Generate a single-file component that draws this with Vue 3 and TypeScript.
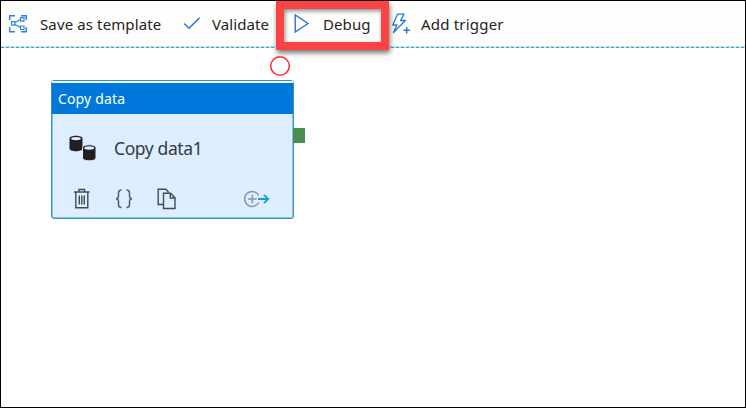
<script setup lang="ts">
import { ref } from 'vue'

const activityType = ref<string>('Copy data')
const activityName = ref<string>('Copy data1')
</script>

<template>
  <main class="frame">
    <header class="toolbar">
      <button class="tool template">
        <svg width="20" height="20" viewBox="0 0 20 20" fill="none" stroke="#2f86dc">
          <path d="M1.700 6V1.700H7M13 1.700h5.300V6M1.700 13v4.800H7M13 17.800h5.300V13" stroke-width="1.500" />
          <path d="M7 8.500l5.500-3M7 10.500l5.500 3" stroke-width="1.200" />
          <path d="M3.500 7.700h3.500v3.500H3.500zM12.500 3.700H16v3.500h-3.500zM12.500 12H16v3.500h-3.500z" stroke-width="1.200" />
        </svg>
        <span>Save as template</span>
      </button>
      <button class="tool validate">
        <svg width="18" height="14" viewBox="0 0 18 14" fill="none" stroke="#2879d5" stroke-width="1.500">
          <path d="M1 6.500l5 4.700L16.500 .9" />
        </svg>
        <span>Validate</span>
      </button>
      <button class="tool debug">
        <svg width="17" height="20" viewBox="0 0 17 20" fill="none" stroke="#2b6fd2" stroke-width="1.400">
          <path d="M2.200 1v17L15 9.500z" />
        </svg>
        <span>Debug</span>
      </button>
      <button class="tool trigger">
        <svg width="20" height="22" viewBox="0 0 20 22" fill="none" stroke="#247bd2" stroke-width="1.300">
          <path d="M6.500 1.200h6.500L9.500 7.500h4.800L2.500 19.500 6 12H1.700z" stroke-linejoin="round" />
          <path d="M15.700 14v6.400M12.500 17.200h6.400" stroke-width="1.500" />
        </svg>
        <span>Add trigger</span>
      </button>
    </header>
    <div class="divider"></div>
    <div class="highlight"></div>

    <svg class="breakpoint" width="22" height="22" viewBox="0 0 22 22">
      <circle cx="11" cy="11" r="9.300" fill="none" stroke="#fa2a2f" stroke-width="1.500" />
    </svg>
    <section class="activity">
      <div class="heading"><span>{{ activityType }}</span></div>
      <div class="details">
        <svg width="28" height="28" viewBox="0 0 28 28">
          <g fill="#211f21">
            <path d="M.5 3.500C.5-.1 13.500-.1 13.500 3.500v10c0 3.600-13 3.600-13 0z" />
            <path d="M13.500 12.500c0-3.600 13.500-3.600 13.500 0V23c0 3.800-13.500 3.800-13.500 0z" stroke="#dceeff" stroke-width="1" />
          </g>
          <ellipse cx="7" cy="3.600" rx="4.900" ry="1.600" fill="#dceeff" />
          <ellipse cx="20.250" cy="13" rx="5" ry="1.700" fill="#dceeff" />
        </svg>
        <span>{{ activityName }}</span>
      </div>
      <div class="actions">
        <svg class="trash" width="18" height="22" viewBox="0 0 18 22" fill="none" stroke="#444b51" stroke-width="1.400">
          <path d="M1 4h15.500M6 4V1.500h5.500V4M2.800 4v15.800h12V4M6.300 7.500v9M8.800 7.500v9M11.300 7.500v9" />
        </svg>
        <svg class="braces" width="20" height="20" viewBox="0 0 20 20" fill="none" stroke="#555c62" stroke-width="1.500">
          <path d="M7.500 1C5 1 4.500 2 4.500 4v3c0 1.800-.7 2.600-2.500 2.800 1.800.2 2.500 1 2.500 2.800v3c0 2.400.7 3 3 3M12.500 1c2.500 0 3 1 3 3v3c0 1.800.7 2.600 2.500 2.800-1.800.2-2.500 1-2.500 2.800v3c0 2.400-.7 3-3 3" />
        </svg>
        <svg class="copy" width="20" height="22" viewBox="0 0 20 22" fill="none" stroke="#444b51" stroke-width="1.400">
          <path d="M6 16.500H1.200V1.200h7.500l3 3M6.500 5.300h7l4.500 4.500v10.700H6.500zM13.300 5.300V10H18" />
        </svg>
        <svg class="connect" width="26" height="18" viewBox="0 0 26 18" fill="none">
          <path d="M14.800 5.500A7.500 7.500 0 1 0 14.800 12.500M8.300 4.700v8.600M4 9h8.600" stroke="#8997a6" stroke-width="1.500" />
          <path d="M14 9h10M20 4.800L24.200 9 20 13.200" stroke="#16a3cf" stroke-width="1.900" />
        </svg>
      </div>
      <i class="port"></i>
    </section>
  </main>
</template>

<style>
body { margin: 0; }
</style>

<style scoped>
.frame {
  position: relative;
  box-sizing: border-box;
  width: 746px;
  height: 408px;
  overflow: hidden;
  border: 1px solid #000;
  background: #fff;
  font-family: "Noto Sans", "Open Sans", sans-serif;
}
.toolbar {
  display: flex;
  box-sizing: border-box;
  height: 46px;
  padding-left: 7px;
  border-bottom: 1px solid #dcdcda;
  background: #fefefd;
}
.tool {
  display: flex;
  align-items: center;
  flex: none;
  height: 45px;
  padding: 0;
  border: 0;
  background: none;
  color: #252423;
  font: 15px/20px "Noto Sans", sans-serif;
  text-align: left;
  white-space: nowrap;
}
.tool svg { flex: none; }
.tool span { padding-top: 1px; }
.template { width: 175px; gap: 12px; letter-spacing: .12px; }
.validate { width: 110px; gap: 11px; letter-spacing: .1px; }
.debug { width: 98px; gap: 13px; letter-spacing: .1px; }
.trigger { gap: 10px; letter-spacing: .2px; }
.divider {
  height: 1px;
  background: repeating-linear-gradient(90deg, #17a9df 0 3px, #c9eaf5 3px 5px);
}
.highlight {
  position: absolute;
  left: 275px;
  top: 0;
  box-sizing: border-box;
  width: 113px;
  height: 49px;
  border: 8px solid #fb4245;
  box-shadow: 1px 3px 5px #0008, inset 1px 2px 4px #0007;
}
.breakpoint {
  position: absolute;
  left: 267.500px;
  top: 53.500px;
}
.activity {
  position: absolute;
  left: 50px;
  top: 79px;
  box-sizing: border-box;
  width: 243px;
  height: 139px;
  border: 1px solid #3495b8;
  border-radius: 3px;
  background: #dceeff;
  box-shadow: inset 0 0 0 .5px #3495b8;
}
.heading {
  display: flex;
  align-items: center;
  box-sizing: border-box;
  height: 33px;
  padding: 0 6px;
  border-top: 2px solid #eff8fc;
  background: #0078db;
  color: #fff;
  font-size: 14px;
  letter-spacing: .15px;
}
.details {
  display: flex;
  align-items: center;
  gap: 17px;
  height: 70px;
  padding-left: 17px;
  color: #343b42;
  font-size: 17.500px;
  letter-spacing: -.4px;
}
.details span { padding-bottom: 2px; }
.actions {
  display: flex;
  align-items: center;
  height: 30px;
  padding-left: 21px;
}
.braces { margin-left: 23px; }
.copy { margin-left: 23px; }
.connect { margin-left: 67px; }
.port {
  position: absolute;
  left: 241px;
  top: 47px;
  width: 12px;
  height: 15px;
  background: #468f50;
}
</style>
